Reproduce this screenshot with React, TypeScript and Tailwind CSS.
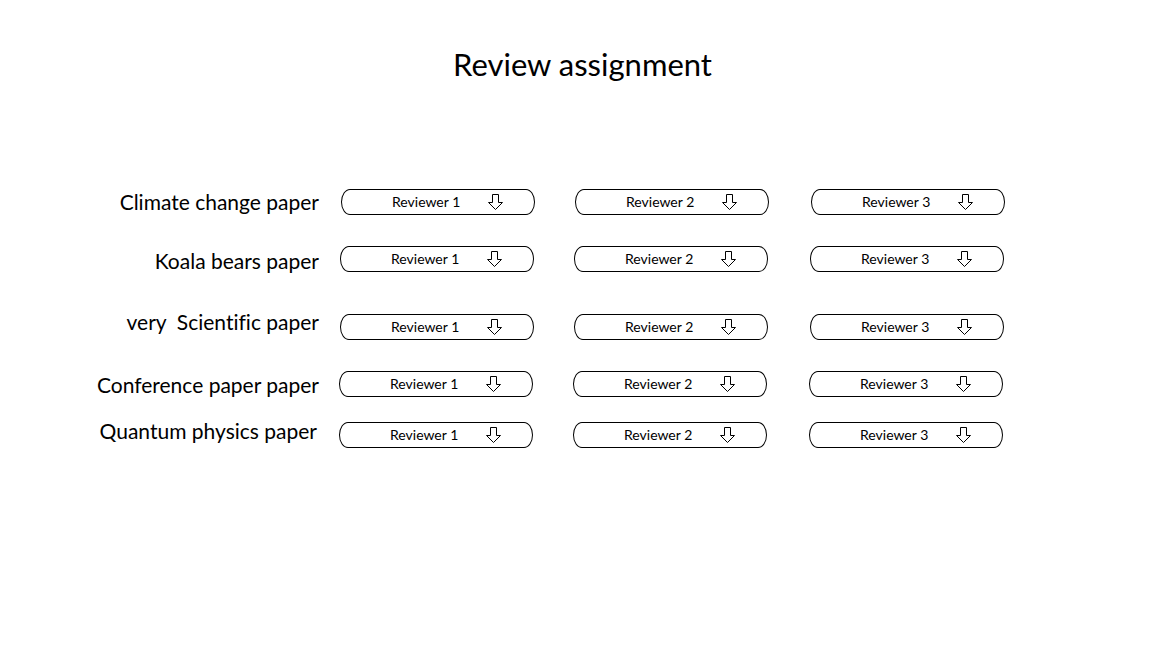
import React from 'react';

type Row = {
  title: string;
  top: string;
  shift: string;
  labelShift: string;
};

const rows: Row[] = [
  { title: 'Climate change paper', top: 'mt-[107px]', shift: 'pl-[341px]', labelShift: 'mb-[2px]' },
  { title: 'Koala bears paper', top: 'mt-[31px]', shift: 'pl-[340px]', labelShift: 'mt-[2px]' },
  { title: 'very\u00a0 Scientific paper', top: 'mt-[42px]', shift: 'pl-[340px]', labelShift: 'mb-[12px]' },
  { title: 'Conference paper paper', top: 'mt-[31px]', shift: 'pl-[339px]', labelShift: '' },
  { title: 'Quantum physics paper', top: 'mt-[25px]', shift: 'pl-[339px]', labelShift: 'mb-[10px] mr-[2px]' },
];

function ArrowDown() {
  return (
    <svg width="15" height="16" viewBox="0 0 15 16" className="shrink-0">
      <path
        d="M4.5 0.5 H10.5 V8.5 H14.5 L7.5 15.5 L0.5 8.5 H4.5 Z"
        fill="white"
        stroke="black"
        strokeWidth="1"
      />
    </svg>
  );
}

function Select({ label }: { label: string }) {
  return (
    <div className="w-[194px] h-[26px] shrink-0 border border-black rounded-[9px/13px] flex items-center bg-white">
      <span className="ml-[50px] w-[96px] text-[14px] text-black leading-none">{label}</span>
      <ArrowDown />
    </div>
  );
}

export default function App() {
  return (
    <div
      className="w-[1157px] h-[651px] bg-white text-black relative [font-variant-ligatures:none]"
      style={{ fontFamily: 'Lato, "Open Sans", sans-serif' }}
    >
      <div className="pt-[46px] flex justify-center">
        <h1 className="text-[31px] leading-[36px] font-normal pl-[8px]">Review assignment</h1>
      </div>
      {rows.map((row) => (
        <div key={row.title} className={`${row.top} relative h-[26px]`}>
          <div className="absolute right-[838px] top-0 h-[26px] flex items-center">
            <span className={`text-[21px] whitespace-nowrap leading-none ${row.labelShift}`}>{row.title}</span>
          </div>
          <div className={`${row.shift} flex items-center`}>
            <Select label="Reviewer 1" />
            <div className="ml-[40px]">
              <Select label="Reviewer 2" />
            </div>
            <div className="ml-[42px]">
              <Select label="Reviewer 3" />
            </div>
          </div>
        </div>
      ))}
    </div>
  );
}
